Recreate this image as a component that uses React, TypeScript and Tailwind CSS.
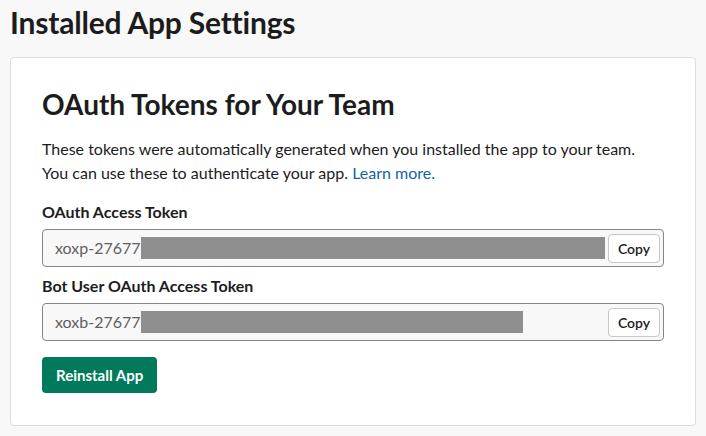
import React from 'react'

const FONT = "font-['Lato','Noto_Sans',sans-serif]"

function TokenField({ label, prefix, maskWidth }: { label: string; prefix: string; maskWidth: number }) {
  return (
    <div>
      <label className="block text-[16px] font-bold leading-[22px] text-[#1d1c1d]">{label}</label>
      <div className="mt-[6px] flex h-[38px] items-center rounded-[4px] border border-[#868686] bg-[#f8f8f8] pl-[12px] pr-[3px]">
        <span className="text-[16px] text-[#616061]">{prefix}</span>
        <span className="h-[22px] bg-[#8f8f8f]" style={{ width: maskWidth }} />
        <div className="flex-1" />
        <button className="flex h-[29px] w-[52px] items-center justify-center rounded-[4px] border border-[#c8c8c8] bg-white text-[14px] font-semibold text-[#1d1c1d]">
          Copy
        </button>
      </div>
    </div>
  )
}

export default function App() {
  return (
    <div className={`${FONT} min-h-screen bg-[#f8f8f8] px-[10px] pb-[10px] pt-[1px] text-[#1d1c1d]`}>
      <h1 className="mt-[1px] text-[30px] font-bold leading-[40px] tracking-[-0.2px]">Installed App Settings</h1>
      <div className="mt-[15px] rounded-[4px] border border-[#dddddd] bg-white px-[31px] pb-[32px] pt-[28px]">
        <h2 className="text-[28px] font-bold leading-[36px]">OAuth Tokens for Your Team</h2>
        <p className="mt-[15px] text-[16px] leading-[24px]">
          These tokens were automatically generated when you installed the app to your team.
          <br />
          You can use these to authenticate your app.{' '}
          <a className="text-[#1264a3]" href="#">Learn more.</a>
        </p>
        <div className="mt-[16px] flex flex-col gap-[8px]">
          <TokenField label="OAuth Access Token" prefix="xoxp-27677" maskWidth={464} />
          <TokenField label="Bot User OAuth Access Token" prefix="xoxb-27677" maskWidth={382} />
        </div>
        <button className="mt-[16px] block h-[36px] rounded-[4px] bg-[#007a5a] px-[14px] text-[15px] font-bold text-white">
          Reinstall App
        </button>
      </div>
    </div>
  )
}
